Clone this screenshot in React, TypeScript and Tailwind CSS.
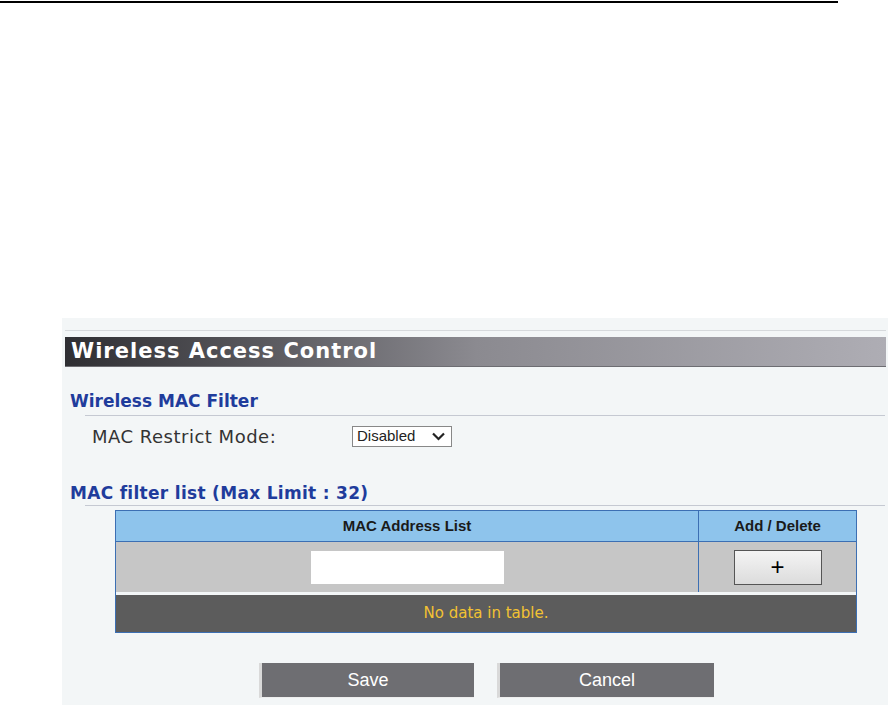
export default function App() {
  return (
    <div className="relative w-[893px] h-[705px] bg-white overflow-hidden" style={{ fontFamily: '"DejaVu Sans", Verdana, sans-serif' }}>
      {/* top rule */}
      <div className="h-[2px] w-[838px] bg-black mt-[1px]" />

      <div className="ml-[62px] mt-[315px] w-[826px] h-[387px] bg-[#f3f6f7] pt-[12px]">
        <div className="ml-[3px] mr-[2px] h-px bg-[#d6d9dc]" />
        <div className="ml-[3px] mr-[2px] mt-[6px] h-[30px] flex items-center pl-[6px] bg-gradient-to-r from-[#2f2f33] via-[#8b8a90] to-[#aeadb4] border-b border-[#6d6d72]">
          <span className="text-white font-bold text-[21px] tracking-[1px]">Wireless Access Control</span>
        </div>

        {/* section 1 */}
        <div className="mt-[24px] ml-[8px] text-[#1f3c9c] font-bold text-[17px] leading-[20px]">Wireless MAC Filter</div>
        <div className="ml-[23px] mr-[3px] mt-[4px] h-px bg-[#c5c9d2]" />
        <div className="flex items-center mt-[8px] h-[24px]">
          <span className="ml-[30px] w-[260px] text-[18px] tracking-[0.5px] text-[#333]">MAC Restrict Mode:</span>
          <div className="flex items-center h-[21px] w-[100px] border border-[#888] bg-white pl-[4px] pr-[6px] text-[15px] text-[#222]" style={{ fontFamily: '"Liberation Sans", Arial, sans-serif' }}>
            <span className="flex-1">Disabled</span>
            <svg width="13" height="9" viewBox="0 0 13 9"><path d="M1 1.5 L6.5 7 L12 1.5" fill="none" stroke="#222" strokeWidth="2.2" /></svg>
          </div>
        </div>

        {/* section 2 */}
        <div className="mt-[35px] ml-[8px] text-[#1f3c9c] font-bold text-[17px] leading-[20px] tracking-[0.3px]">MAC filter list (Max Limit : 32)</div>
        <div className="ml-[23px] mr-[3px] mt-[2px] h-px bg-[#c5c9d2]" />

        <div className="ml-[53px] mt-[4px] w-[742px] border border-[#3c6fb3] bg-[#3c6fb3]" style={{ fontFamily: '"Liberation Sans", Arial, sans-serif' }}>
          <div className="flex h-[30px] bg-[#8ec4ec] text-[15px] font-bold text-[#1a1a1a]">
            <div className="w-[583px] flex items-center justify-center border-r border-[#3c6fb3]">MAC Address List</div>
            <div className="flex-1 flex items-center justify-center">Add / Delete</div>
          </div>
          <div className="flex h-[51px] bg-[#c6c6c6] border-t border-[#3c6fb3]">
            <div className="w-[583px] flex items-center justify-center border-r border-[#3c6fb3]">
              <div className="w-[193px] h-[33px] bg-white" />
            </div>
            <div className="flex-1 flex items-center justify-center">
              <div className="w-[88px] h-[35px] flex items-center justify-center bg-gradient-to-b from-[#f4f4f4] to-[#dcdcdc] border border-[#555] text-[24px] text-black leading-none">+</div>
            </div>
          </div>
          <div className="h-[3px] bg-[#f3f6f7]" />
          <div className="h-[37px] flex items-center justify-center bg-[#5c5c5c] text-[15px] text-[#f2c233]" style={{ fontFamily: '"DejaVu Sans", Verdana, sans-serif' }}>
            No data in table.
          </div>
        </div>

        <div className="flex ml-[197px] mt-[30px] gap-[23px]" style={{ fontFamily: '"Liberation Sans", Arial, sans-serif' }}>
          <div className="w-[215px] h-[35px] flex items-center justify-center bg-[#6e6e72] border-l-[3px] border-[#d9d9d9] border-b border-b-[#eee] text-white text-[18px]">Save</div>
          <div className="w-[217px] h-[35px] flex items-center justify-center bg-[#6e6e72] border-l-[3px] border-[#d9d9d9] border-b border-b-[#eee] text-white text-[18px]">Cancel</div>
        </div>
      </div>
    </div>
  )
}
